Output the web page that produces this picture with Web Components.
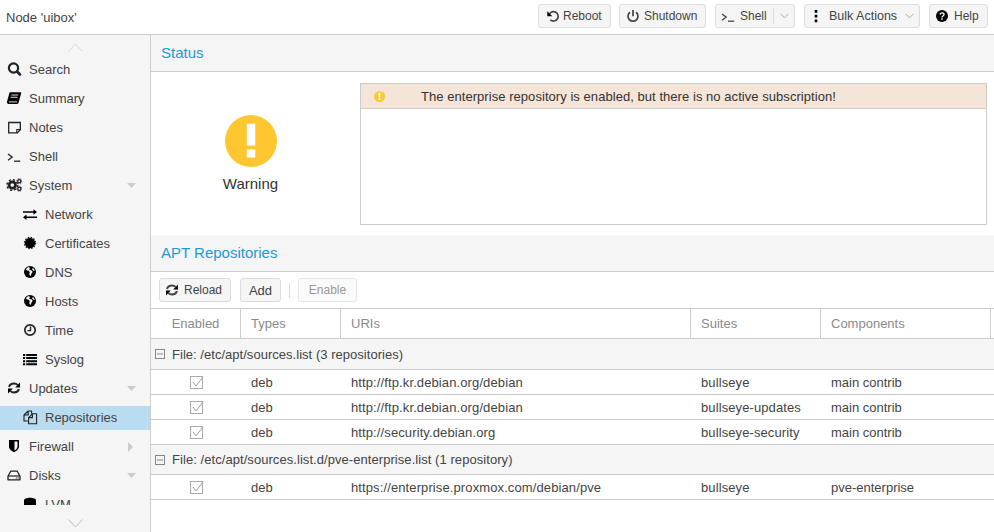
<!DOCTYPE html>
<html>
<head>
<meta charset="utf-8">
<title>Node uibox</title>
<style>
  html, body { margin: 0; height: 532px; overflow: hidden; background: #fff; }
  body { font: 13px "Liberation Sans", Arial, sans-serif; color: #444; }
</style>
</head>
<body>
<pve-app>
  <pve-topbar slot="top">
    <span slot="title">Node 'uibox'</span>
    <pve-button icon="undo" width="73" style="margin-right:-1px;--pad:7px;--gap:4px;--fs:12px">Reboot</pve-button>
    <pve-button icon="power" width="87" style="--pad:6px;--gap:5px;--fs:12px">Shutdown</pve-button>
    <pve-button icon="terminal" width="80" split style="--pad:5px;--gap:6px;--fs:12px">Shell</pve-button>
    <pve-button icon="dots" width="116" menu style="--pad:4px;--gap:7px;--fs:12.5px">Bulk Actions</pve-button>
    <pve-button icon="help" width="59" style="--pad:5px;--gap:6px;--fs:12px">Help</pve-button>
  </pve-topbar>
  <pve-sidebar slot="side">
    <pve-nav icon="search">Search</pve-nav>
    <pve-nav icon="book">Summary</pve-nav>
    <pve-nav icon="note">Notes</pve-nav>
    <pve-nav icon="terminal">Shell</pve-nav>
    <pve-nav icon="gears" arrow="down">System</pve-nav>
    <pve-nav icon="exchange" child>Network</pve-nav>
    <pve-nav icon="cert" child>Certificates</pve-nav>
    <pve-nav icon="globe" child>DNS</pve-nav>
    <pve-nav icon="globe" child>Hosts</pve-nav>
    <pve-nav icon="clock" child>Time</pve-nav>
    <pve-nav icon="list" child>Syslog</pve-nav>
    <pve-nav icon="refresh" arrow="down">Updates</pve-nav>
    <pve-nav icon="files" child selected>Repositories</pve-nav>
    <pve-nav icon="shield" arrow="right">Firewall</pve-nav>
    <pve-nav icon="hdd" arrow="down">Disks</pve-nav>
    <pve-nav icon="db" child>LVM</pve-nav>
  </pve-sidebar>
  <pve-panel title="Status">
    <pve-status label="Warning">The enterprise repository is enabled, but there is no active subscription!</pve-status>
  </pve-panel>
  <pve-panel title="APT Repositories">
    <pve-toolbar>
      <pve-button icon="refresh" width="72" style="--pad:5px;--gap:6px;--fs:12px">Reload</pve-button>
      <pve-button width="41">Add</pve-button>
      <pve-sep></pve-sep>
      <pve-button width="59" disabled style="--fs:12px">Enable</pve-button>
    </pve-toolbar>
    <pve-repo-header></pve-repo-header>
    <pve-repo-group height="31" style="--ls:.03px">File: /etc/apt/sources.list (3 repositories)</pve-repo-group>
    <pve-repo-row uri="http://ftp.kr.debian.org/debian" suite="bullseye" comp="main contrib"></pve-repo-row>
    <pve-repo-row uri="http://ftp.kr.debian.org/debian" suite="bullseye-updates" comp="main contrib"></pve-repo-row>
    <pve-repo-row uri="http://security.debian.org" suite="bullseye-security" comp="main contrib"></pve-repo-row>
    <pve-repo-group height="30" style="--ls:.06px">File: /etc/apt/sources.list.d/pve-enterprise.list (1 repository)</pve-repo-group>
    <pve-repo-row uri="https://enterprise.proxmox.com/debian/pve" suite="bullseye" comp="pve-enterprise"></pve-repo-row>
  </pve-panel>
</pve-app>

<script>
// icons are all on a 16 grid, filled with currentColor unless stroked
const ICONS = {
  search: '<circle cx="7.500" cy="7" r="4.600" fill="none" stroke="currentColor" stroke-width="2.200"/><path d="M11 10.500l3 3" stroke="currentColor" stroke-width="2.600" stroke-linecap="round"/>',
  book: '<path d="M4.600 2.200h10c.5 0 .7.4.6.8l-2.500 9.200c-.3 1-1 1.800-2.200 1.800H2.600C1.400 14 .8 13 1 11.800L3.200 3.400C3.400 2.700 3.900 2.200 4.600 2.200z"/><path d="M5.400 5h6.800M4.700 7.300h6.800M2.900 11.900h8.300" stroke="#f5f5f5" stroke-width=".9" fill="none"/>',
  note: '<path d="M2.700 3.500h11.600v7.300l-3 3H2.700z" fill="none" stroke="currentColor" stroke-width="1.300"/><path d="M10.800 13.700v-3.200h3.500" fill="none" stroke="currentColor" stroke-width="1.100"/>',
  terminal: '<path d="M2 6L6.200 9 2 12.200" fill="none" stroke="currentColor" stroke-width="1.300"/><path d="M8 13.200h6.200" stroke="currentColor" stroke-width="1.300"/>',
  gears: '<circle cx="6.300" cy="8" r="3.200" fill="none" stroke="currentColor" stroke-width="2.700"/><circle cx="6.300" cy="8" r="5.300" fill="none" stroke="currentColor" stroke-width="1.500" stroke-dasharray="2.100 2.060"/><circle cx="13.300" cy="4.300" r="1.600" fill="none" stroke="currentColor" stroke-width="1.300"/><circle cx="13.300" cy="4.300" r="2.600" fill="none" stroke="currentColor" stroke-width=".9" stroke-dasharray="1 1.040"/><circle cx="13.300" cy="11.700" r="1.600" fill="none" stroke="currentColor" stroke-width="1.300"/><circle cx="13.300" cy="11.700" r="2.600" fill="none" stroke="currentColor" stroke-width=".9" stroke-dasharray="1 1.040"/>',
  exchange: '<path d="M1 5.200h10.500V3.200L15 6l-3.500 2.800V6.800H1zM15 10.400H4.500V8.500L1 11.300l3.500 2.800v-2H15z"/>',
  cert: '<circle cx="8" cy="8" r="5.200"/><circle cx="8" cy="8" r="5.600" fill="none" stroke="currentColor" stroke-width="1.200" stroke-dasharray="1.500 1.430"/>',
  globe: '<circle cx="8" cy="8" r="6"/><path d="M7 3L5.200 3.700 4 5.200l.9 1.200 1.900.4 1 1.500-.6 1.700.8 1.800 1-.4.500-2.100 1.200-1.400-.9-1.500-2-.4-.8-1.100 1.200-.5zM10.800 4.100l-.7 1.500 1.300 1.100 1.300.4c-.2-1.200-.9-2.300-1.900-3z" fill="#f5f5f5"/>',
  clock: '<circle cx="8" cy="8" r="5.200" fill="none" stroke="currentColor" stroke-width="1.700"/><path d="M8.500 4.600v4H5.400" fill="none" stroke="currentColor" stroke-width="1.400"/>',
  list: '<path d="M1 3h2.200v2H1zM4.200 3H15v2H4.200zM1 6.100h2.200v2H1zM4.200 6.100H15v2H4.200zM1 9.200h2.200v2H1zM4.200 9.200H15v2H4.200zM1 12.200h2.200v2H1zM4.200 12.200H15v2H4.200z"/>',
  refresh: '<path d="M3 6.800C3.700 4.800 5.600 3.500 8 3.500c1.400 0 2.700.5 3.600 1.400" fill="none" stroke="currentColor" stroke-width="2"/><path d="M14 2.600v4.800H9.200z"/><path d="M13 9.200c-.7 2-2.600 3.300-5 3.300-1.400 0-2.700-.5-3.600-1.400" fill="none" stroke="currentColor" stroke-width="2"/><path d="M2 13.400V8.600h4.800z"/>',
  files: '<path d="M6.200 2L2 6v6h4.200M6.200 2h3.400v2.700M6.200 2v4H2" fill="none" stroke="currentColor" stroke-width="1.100" stroke-linejoin="round"/><path d="M10.400 4.800H14.600v10H6.600V8.600z" fill="#b9dcf0" stroke="currentColor" stroke-width="1.100" stroke-linejoin="round"/><path d="M10.400 4.800v3.800H6.600" fill="none" stroke="currentColor" stroke-width="1.100"/>',
  shield: '<path d="M3 2h10v6.500c0 2.900-2.900 4.700-5 5.700-2.100-1-5-2.800-5-5.700z"/><path d="M8.500 3.600h3v4.900c0 1.700-1.500 3-3 3.900z" fill="#f5f5f5"/>',
  hdd: '<path d="M4.700 4.200h6.600l2.700 5v3.600H2V9.200z" fill="none" stroke="currentColor" stroke-width="1.300" stroke-linejoin="round"/><path d="M2.100 9h11.800" stroke="currentColor" stroke-width="1.200"/><path d="M9.800 10.500h1v1h-1zM11.700 10.500h1v1h-1z"/>',
  db: '<path d="M2 4.500C2 2.800 4.700 1.800 8 1.800s6 1 6 2.700v9c0 1.700-2.700 2.700-6 2.700s-6-1-6-2.700z"/>',
  undo: '<path d="M3.800 7.800a4.700 4.700 0 1 1 1.500 4" fill="none" stroke="currentColor" stroke-width="1.700"/><path d="M2.300 3.200v5h5z"/>',
  power: '<path d="M5 4.200a5 5 0 1 0 6 0" fill="none" stroke="currentColor" stroke-width="1.700"/><path d="M8 2v6.200" stroke="currentColor" stroke-width="1.700"/>',
  dots: '<path d="M6.700 2h2.600v2.800H6.700zM6.700 6.700h2.600v2.800H6.700zM6.700 11.400h2.600v2.800H6.700z"/>',
  help: '<circle cx="8" cy="8" r="6"/><path d="M6 6.500c.2-1.100 1-1.600 2-1.600 1.200 0 2 .7 2 1.700 0 1.400-2 1.500-2 2.800" fill="none" stroke="#f5f5f5" stroke-width="1.400"/><path d="M7.200 10.300h1.600v1.500H7.200z" fill="#f5f5f5"/>',
  warn: '<circle cx="8" cy="8" r="8" fill="#ffc72f"/><path d="M6.700 2.700h2.600v6.700H6.700zM6.700 10.600h2.600v2.500H6.700z" fill="#fff"/>'
};

class PveIcon extends HTMLElement {
  connectedCallback() {
    const root = this.attachShadow({mode: 'open'});
    const size = this.getAttribute('size') || 16;
    root.innerHTML = `<style>:host{display:inline-flex;flex:none}svg{display:block}</style>
      <svg width="${size}" height="${size}" viewBox="0 0 16 16">${ICONS[this.getAttribute('name')] || ''}</svg>`;
  }
}
customElements.define('pve-icon', PveIcon);

class PveApp extends HTMLElement {
  constructor() {
    super();
    this.attachShadow({mode: 'open'}).innerHTML = `
      <style>
        :host { display: grid; grid-template: 35px 497px / 151px 843px; width: 994px; height: 532px; }
        .top { grid-column: 1 / 3; }
        .main { display: flex; flex-direction: column; min-width: 0; overflow: hidden; }
      </style>
      <div class="top"><slot name="top"></slot></div>
      <slot name="side"></slot>
      <div class="main"><slot></slot></div>`;
  }
}
customElements.define('pve-app', PveApp);

class PveTopbar extends HTMLElement {
  constructor() {
    super();
    this.attachShadow({mode: 'open'}).innerHTML = `
      <style>
        :host { display: flex; align-items: center; height: 34px; box-sizing: content-box; border-bottom: 1px solid #ccc; padding: 0 6px 0; gap: 9px; background: #fff; }
        ::slotted(pve-button) { margin-bottom: 2px; }
        .title { flex: 1; color: #444; }
      </style>
      <div class="title"><slot name="title"></slot></div>
      <slot></slot>`;
  }
}
customElements.define('pve-topbar', PveTopbar);

class PveButton extends HTMLElement {
  connectedCallback() {
    const icon = this.getAttribute('icon');
    const split = this.hasAttribute('split');
    const menu = this.hasAttribute('menu');
    const chev = '<svg class="chev" width="9" height="6" viewBox="0 0 9 6"><path d="M.5.8l4 4 4-4" fill="none" stroke="#aaa"/></svg>';
    this.attachShadow({mode: 'open'}).innerHTML = `
      <style>
        :host { display: inline-flex; box-sizing: border-box; flex: none; align-items: center; height: 24px; width: ${this.getAttribute('width')}px;
          background: #f5f5f5; border: 1px solid #ddd; border-radius: 3px; color: #444; gap: var(--gap, 6px); padding-left: var(--pad, 0);
          justify-content: ${icon ? 'flex-start' : 'center'}; white-space: nowrap; font-size: var(--fs, 13px); }
        :host([disabled]) { color: #999; background: #fafafa; border-color: #e6e6e6; }
        pve-icon { color: #444; margin: 0 -1.500px; }
        .div { width: 1px; height: 16px; background: #ddd; }
        .chev { margin-left: ${menu ? 1 : 0}px; }
      </style>
      ${icon ? `<pve-icon name="${icon}" size="16"></pve-icon>` : ''}<span><slot></slot></span>
      ${split ? '<span class="div"></span>' : ''}${split || menu ? chev : ''}`;
  }
}
customElements.define('pve-button', PveButton);

class PveSidebar extends HTMLElement {
  constructor() {
    super();
    this.attachShadow({mode: 'open'}).innerHTML = `
      <style>
        :host { display: flex; flex-direction: column; height: 497px; background: #f5f5f5; border-right: 1px solid #ccc; box-sizing: border-box; overflow: hidden; }
        .scroll { flex: none; display: flex; justify-content: center; box-sizing: border-box; }
        .up { height: 23px; padding-top: 8px; }
        .down { height: 27px; padding-top: 14px; }
        .list { flex: 1; overflow: hidden; display: flex; flex-direction: column; gap: 5px; }
      </style>
      <div class="scroll up"><svg width="15" height="9" viewBox="0 0 15 9"><path d="M.5 8.500L7.500 1l7 7.500" fill="none" stroke="#d8d8d8"/></svg></div>
      <div class="list"><slot></slot></div>
      <div class="scroll down"><svg width="15" height="9" viewBox="0 0 15 9"><path d="M.5.500l7 7.500 7-7.500" fill="none" stroke="#bbb"/></svg></div>`;
  }
}
customElements.define('pve-sidebar', PveSidebar);

class PveNav extends HTMLElement {
  connectedCallback() {
    const arrow = this.getAttribute('arrow');
    let tri = '';
    if (arrow == 'down') tri = '<svg class="tri" style="left:127px;top:9px" width="9" height="5" viewBox="0 0 9 5"><path d="M0 0h9L4.500 5z" fill="#ccc"/></svg>';
    if (arrow == 'right') tri = '<svg class="tri" style="left:128px;top:7px" width="5" height="10" viewBox="0 0 5 10"><path d="M0 0l5 5-5 5z" fill="#ccc"/></svg>';
    this.attachShadow({mode: 'open'}).innerHTML = `
      <style>
        :host { display: flex; flex: none; box-sizing: border-box; align-items: center; height: 24px; padding: 0 0 2px 6px; position: relative; color: #444; }
        :host([child]) { padding-left: 22px; }
        :host([selected]) { background: #b9dcf0; }
        pve-icon { margin-right: 7px; color: #222; }
        .tri { position: absolute; }
      </style>
      <pve-icon name="${this.getAttribute('icon')}"></pve-icon><slot></slot>${tri}`;
  }
}
customElements.define('pve-nav', PveNav);

class PvePanel extends HTMLElement {
  connectedCallback() {
    this.attachShadow({mode: 'open'}).innerHTML = `
      <style>
        :host { display: block; flex: none; }
        .head { height: 37px; box-sizing: border-box; border-bottom: 1px solid #ccc; background: #f5f5f5; padding-left: 10px; line-height: 36px; font-size: 15px; color: #1c9ad6; }
      </style>
      <div class="head">${this.getAttribute('title')}</div>
      <slot></slot>`;
  }
}
customElements.define('pve-panel', PvePanel);

class PveStatus extends HTMLElement {
  connectedCallback() {
    this.attachShadow({mode: 'open'}).innerHTML = `
      <style>
        :host { display: flex; height: 163px; box-sizing: border-box; padding: 11px 7px 10px 0; }
        .sum { width: 199px; margin-right: 10px; flex: none; display: flex; flex-direction: column; align-items: center; padding-top: 32px; box-sizing: border-box; font-size: 15px; color: #333; gap: 8px; }
        .box { flex: 1; border: 1px solid #ccc; }
        .msg { height: 24px; background: #f5e5d8; border-bottom: 1px solid #ccc; display: flex; align-items: center; padding-left: 13px; color: #333; letter-spacing: .05px; }
        .msg pve-icon { margin-right: 36px; }
      </style>
      <div class="sum"><pve-icon name="warn" size="52"></pve-icon>${this.getAttribute('label')}</div>
      <div class="box"><div class="msg"><pve-icon name="warn" size="11"></pve-icon><slot></slot></div></div>`;
  }
}
customElements.define('pve-status', PveStatus);

class PveToolbar extends HTMLElement {
  constructor() {
    super();
    this.attachShadow({mode: 'open'}).innerHTML = `
      <style>:host { display: flex; align-items: center; height: 36px; box-sizing: border-box; padding-left: 8px; gap: 9px; }</style>
      <slot></slot>`;
  }
}
customElements.define('pve-toolbar', PveToolbar);

class PveSep extends HTMLElement {
  constructor() {
    super();
    this.attachShadow({mode: 'open'}).innerHTML = `<style>:host { display: block; width: 1px; height: 15px; background: #ddd; margin: 0 -1px 0 -1px; }</style>`;
  }
}
customElements.define('pve-sep', PveSep);

const COLS = 'grid-template-columns: 90px 100px 350px 130px 170px 1fr;';

class PveRepoHeader extends HTMLElement {
  constructor() {
    super();
    const names = ['Enabled', 'Types', 'URIs', 'Suites', 'Components', ''];
    this.attachShadow({mode: 'open'}).innerHTML = `
      <style>
        :host { display: grid; ${COLS} height: 31px; box-sizing: border-box; border-top: 1px solid #ccc; border-bottom: 1px solid #ccc; color: #8a8a8a; }
        div { box-sizing: border-box; border-right: 1px solid #ccc; padding-left: 10px; line-height: 29px; }
        div:first-of-type { padding: 0; text-align: center; }
        div:last-child { border: 0; }
      </style>
      ${names.map(n => `<div>${n}</div>`).join('')}`;
  }
}
customElements.define('pve-repo-header', PveRepoHeader);

class PveRepoGroup extends HTMLElement {
  connectedCallback() {
    this.attachShadow({mode: 'open'}).innerHTML = `
      <style>
        :host { display: flex; align-items: center; height: ${this.getAttribute('height')}px; box-sizing: border-box; border-bottom: 1px solid #ccc; background: #f5f5f5; padding-left: 4px; gap: 7px; color: #444; letter-spacing: var(--ls, 0); }
        svg { display: block; }
      </style>
      <svg width="10" height="10" viewBox="0 0 10 10"><rect x=".5" y=".5" width="9" height="9" fill="none" stroke="#888"/><path d="M2 5h6" stroke="#888"/></svg>
      <span><slot></slot></span>`;
  }
}
customElements.define('pve-repo-group', PveRepoGroup);

class PveRepoRow extends HTMLElement {
  connectedCallback() {
    this.attachShadow({mode: 'open'}).innerHTML = `
      <style>
        :host { display: grid; ${COLS} height: 25px; box-sizing: border-box; border-bottom: 1px solid #ccc; line-height: 25px; color: #444; }
        div { padding-left: 10px; white-space: nowrap; }
        .uri { letter-spacing: .11px; }
        .suite { letter-spacing: .1px; }
        .check { padding: 0 0 0 39px; display: flex; align-items: center; }
        svg { display: block; overflow: visible; }
      </style>
      <div class="check"><svg width="13" height="13" viewBox="0 0 13 13"><rect x=".5" y=".5" width="12" height="12" fill="none" stroke="#aaa"/><path d="M3 6l3 4 7-9" fill="none" stroke="#a0a0a0"/></svg></div>
      <div>deb</div>
      <div class="uri">${this.getAttribute('uri')}</div>
      <div class="suite">${this.getAttribute('suite')}</div>
      <div>${this.getAttribute('comp')}</div>
      <div></div>`;
  }
}
customElements.define('pve-repo-row', PveRepoRow);
</script>
</body>
</html>
